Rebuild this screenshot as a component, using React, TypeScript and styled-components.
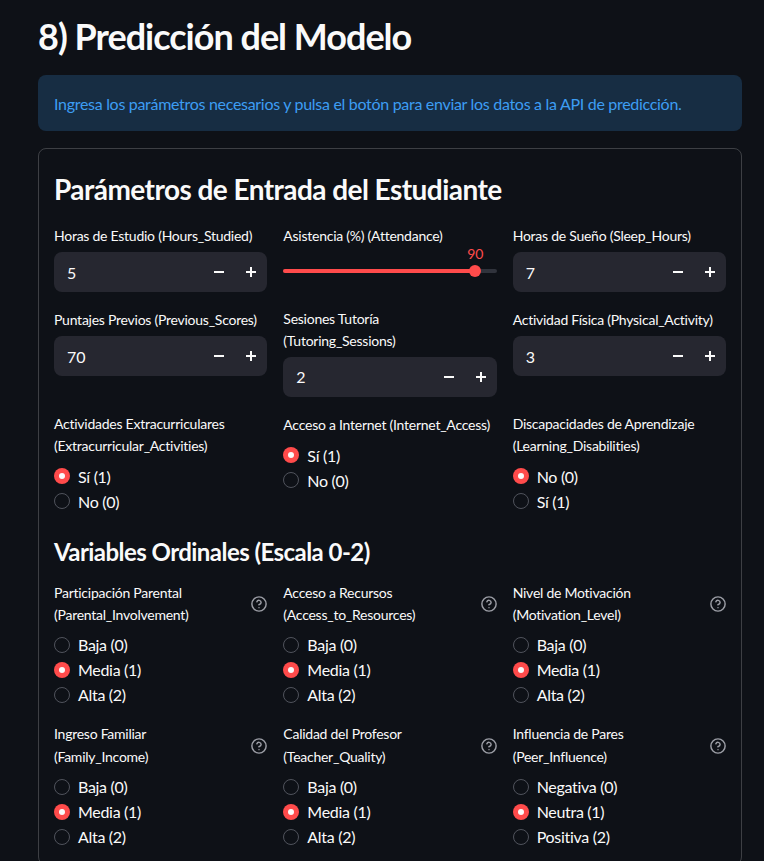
import React from "react";
import styled, { createGlobalStyle } from "styled-components";

const FONT = `"Lato", "Liberation Sans", sans-serif`;

const GlobalStyle = createGlobalStyle`
  html, body { margin: 0; padding: 0; background: #0e1117; }
  body { font-family: ${FONT}; color: #fafafa; -webkit-font-smoothing: antialiased; }
  * { box-sizing: border-box; }
`;

const Page = styled.main`
  padding: 14px 22px 40px 38px;
`;

const Title = styled.h2`
  margin: 0 0 17px;
  font-size: 36px;
  line-height: 44px;
  font-weight: 700;
  color: #fafafa;
  letter-spacing: -1px;
`;

const InfoBox = styled.div`
  height: 56px;
  display: flex;
  align-items: center;
  padding: 0 16px;
  border-radius: 8px;
  background: #172d43;
  color: #3d9df3;
  font-size: 16px;
  letter-spacing: -0.3px;
  margin-bottom: 17px;
`;

const Card = styled.section`
  border: 1px solid rgba(250, 250, 250, 0.2);
  border-radius: 8px;
  padding: 15px;
  display: flex;
  flex-direction: column;
  gap: 16px;
`;

const SectionHeading = styled.h3<{ $size: number; $pt: number; $pb: number; $lh: number }>`
  margin: 0;
  font-size: ${(p) => p.$size}px;
  line-height: ${(p) => p.$lh}px;
  padding: ${(p) => p.$pt}px 0 ${(p) => p.$pb}px;
  font-weight: 700;
  letter-spacing: -0.55px;
`;

const Row = styled.div`
  display: grid;
  grid-template-columns: repeat(3, 1fr);
  gap: 16px;
  align-items: start;
`;

const Field = styled.div`
  display: flex;
  flex-direction: column;
  min-width: 0;
`;

const LabelRow = styled.div`
  display: flex;
  justify-content: space-between;
  align-items: center;
  gap: 8px;
  min-height: 24px;
  margin-bottom: 4px;
`;

const LabelText = styled.span`
  font-size: 14px;
  line-height: 22.4px;
  color: #fafafa;
  letter-spacing: -0.25px;
`;

const NumberBox = styled.div`
  height: 40px;
  border-radius: 8px;
  background: #262730;
  display: flex;
  align-items: center;
  padding-left: 13px;
`;

const NumberValue = styled.span`
  flex: 1;
  font-size: 16px;
  color: #fafafa;
`;

const StepButton = styled.span`
  width: 32px;
  height: 40px;
  display: flex;
  align-items: center;
  justify-content: center;
  color: #fafafa;
`;

const SliderArea = styled.div`
  position: relative;
  height: 40px;
`;

const Track = styled.div`
  position: absolute;
  left: 0;
  right: 0;
  top: 17px;
  height: 4px;
  border-radius: 2px;
  background: #30333c;
`;

const TrackFill = styled.div`
  position: absolute;
  left: 0;
  top: 0;
  bottom: 0;
  border-radius: 2px;
  background: #ff4b4b;
`;

const Thumb = styled.div`
  position: absolute;
  top: 13px;
  width: 12px;
  height: 12px;
  margin-left: -6px;
  border-radius: 50%;
  background: #ff4b4b;
`;

const ThumbValue = styled.div`
  position: absolute;
  top: -7px;
  transform: translateX(-50%);
  font-size: 14px;
  line-height: 18px;
  color: #ff4b4b;
`;

const RadioList = styled.div`
  display: flex;
  flex-direction: column;
  padding-top: 2px;
`;

const RadioItem = styled.label`
  display: flex;
  align-items: center;
  gap: 8px;
  height: 25px;
  font-size: 16px;
  color: #fafafa;
  letter-spacing: -0.3px;
`;

const RadioDot = styled.span<{ $checked: boolean }>`
  width: 16px;
  height: 16px;
  border-radius: 50%;
  flex: none;
  display: flex;
  align-items: center;
  justify-content: center;
  background: ${(p) => (p.$checked ? "#ff4b4b" : "transparent")};
  border: ${(p) => (p.$checked ? "none" : "1px solid #50535c")};
  &::after {
    content: "";
    display: ${(p) => (p.$checked ? "block" : "none")};
    width: 6px;
    height: 6px;
    border-radius: 50%;
    background: #fafafa;
  }
`;

const HelpWrap = styled.span`
  flex: none;
  display: flex;
  color: #9c9ea6;
`;

const Minus = () => (
  <svg width="12" height="12" viewBox="0 0 12 12">
    <path d="M1 6h10" stroke="currentColor" strokeWidth="2" />
  </svg>
);

const Plus = () => (
  <svg width="12" height="12" viewBox="0 0 12 12">
    <path d="M1 6h10M6 1v10" stroke="currentColor" strokeWidth="2" />
  </svg>
);

const Help = () => (
  <HelpWrap>
    <svg width="16" height="16" viewBox="1 1 22 22" fill="none" stroke="currentColor" strokeWidth="2" strokeLinecap="round" strokeLinejoin="round">
      <circle cx="12" cy="12" r="9.8" />
      <path d="M9.09 9a3 3 0 0 1 5.83 1c0 2-3 3-3 3" />
      <path d="M12 17h.01" />
    </svg>
  </HelpWrap>
);

const Label = ({ lines, help }: { lines: string[]; help?: boolean }) => (
  <LabelRow>
    <LabelText>
      {lines.map((l, i) => (
        <React.Fragment key={i}>
          {i > 0 && <br />}
          {l}
        </React.Fragment>
      ))}
    </LabelText>
    {help && <Help />}
  </LabelRow>
);

const NumberField = ({ label, value }: { label: string[]; value: number }) => (
  <Field>
    <Label lines={label} />
    <NumberBox>
      <NumberValue>{value}</NumberValue>
      <StepButton>
        <Minus />
      </StepButton>
      <StepButton>
        <Plus />
      </StepButton>
    </NumberBox>
  </Field>
);

const SliderField = ({ label, value, min, max }: { label: string; value: number; min: number; max: number }) => {
  const pct = ((value - min) / (max - min)) * 100;
  return (
    <Field>
      <Label lines={[label]} />
      <SliderArea>
        <Track>
          <TrackFill style={{ width: `${pct}%` }} />
        </Track>
        <Thumb style={{ left: `${pct}%` }} />
        <ThumbValue style={{ left: `${pct}%` }}>{value}</ThumbValue>
      </SliderArea>
    </Field>
  );
};

const RadioField = ({ label, options, selected, help }: { label: string[]; options: string[]; selected: number; help?: boolean }) => (
  <Field>
    <Label lines={label} help={help} />
    <RadioList>
      {options.map((o, i) => (
        <RadioItem key={o}>
          <RadioDot $checked={i === selected} />
          {o}
        </RadioItem>
      ))}
    </RadioList>
  </Field>
);

const LEVELS = ["Baja (0)", "Media (1)", "Alta (2)"];

export default function App() {
  return (
    <>
      <GlobalStyle />
      <Page>
        <Title>8) Predicción del Modelo</Title>
        <InfoBox>Ingresa los parámetros necesarios y pulsa el botón para enviar los datos a la API de predicción.</InfoBox>
        <Card>
          <SectionHeading $size={28} $lh={34} $pt={8} $pb={2}>
            Parámetros de Entrada del Estudiante
          </SectionHeading>
          <Row>
            <NumberField label={["Horas de Estudio (Hours_Studied)"]} value={5} />
            <SliderField label="Asistencia (%) (Attendance)" value={90} min={0} max={100} />
            <NumberField label={["Horas de Sueño (Sleep_Hours)"]} value={7} />
          </Row>
          <Row>
            <NumberField label={["Puntajes Previos (Previous_Scores)"]} value={70} />
            <NumberField label={["Sesiones Tutoría", "(Tutoring_Sessions)"]} value={2} />
            <NumberField label={["Actividad Física (Physical_Activity)"]} value={3} />
          </Row>
          <Row>
            <RadioField label={["Actividades Extracurriculares", "(Extracurricular_Activities)"]} options={["Sí (1)", "No (0)"]} selected={0} />
            <RadioField label={["Acceso a Internet (Internet_Access)"]} options={["Sí (1)", "No (0)"]} selected={0} />
            <RadioField label={["Discapacidades de Aprendizaje", "(Learning_Disabilities)"]} options={["No (0)", "Sí (1)"]} selected={0} />
          </Row>
          <SectionHeading $size={24} $lh={29} $pt={7} $pb={0}>
            Variables Ordinales (Escala 0-2)
          </SectionHeading>
          <Row>
            <RadioField label={["Participación Parental", "(Parental_Involvement)"]} options={LEVELS} selected={1} help />
            <RadioField label={["Acceso a Recursos", "(Access_to_Resources)"]} options={LEVELS} selected={1} help />
            <RadioField label={["Nivel de Motivación", "(Motivation_Level)"]} options={LEVELS} selected={1} help />
          </Row>
          <Row>
            <RadioField label={["Ingreso Familiar", "(Family_Income)"]} options={LEVELS} selected={1} help />
            <RadioField label={["Calidad del Profesor", "(Teacher_Quality)"]} options={LEVELS} selected={1} help />
            <RadioField label={["Influencia de Pares", "(Peer_Influence)"]} options={["Negativa (0)", "Neutra (1)", "Positiva (2)"]} selected={1} help />
          </Row>
        </Card>
      </Page>
    </>
  );
}
